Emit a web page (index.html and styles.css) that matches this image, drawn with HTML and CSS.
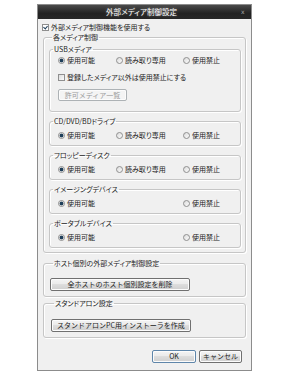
FILE: index.html
```html
<!DOCTYPE html>
<html lang="ja">

<head>
    <meta charset="utf-8">
    <meta name="viewport" content="width=device-width, initial-scale=1.0">
    <title>外部メディア制御設定</title>
    <link rel="stylesheet" href="styles.css">
</head>

<body>

    <div class="dialog">
        <div class="titlebar">
            <span class="title">外部メディア制御設定</span>
            <span class="close">x</span>
        </div>

        <div class="content">
            <label class="check top"><input type="checkbox" checked>外部メディア制御機能を使用する</label>

            <fieldset class="group outer">
                <legend>各メディア制御</legend>

                <fieldset class="group usb">
                    <legend>USBメディア</legend>
                    <div class="radios">
                        <label><input type="radio" name="usb" checked>使用可能</label>
                        <label><input type="radio" name="usb">読み取り専用</label>
                        <label><input type="radio" name="usb">使用禁止</label>
                    </div>
                    <label class="check"><input type="checkbox">登録したメディア以外は使用禁止にする</label>
                    <button class="btn list" disabled>許可メディア一覧</button>
                </fieldset>

                <fieldset class="group media">
                    <legend>CD/DVD/BDドライブ</legend>
                    <div class="radios">
                        <label><input type="radio" name="cd" checked>使用可能</label>
                        <label><input type="radio" name="cd">読み取り専用</label>
                        <label><input type="radio" name="cd">使用禁止</label>
                    </div>
                </fieldset>

                <fieldset class="group media">
                    <legend>フロッピーディスク</legend>
                    <div class="radios">
                        <label><input type="radio" name="fd" checked>使用可能</label>
                        <label><input type="radio" name="fd">読み取り専用</label>
                        <label><input type="radio" name="fd">使用禁止</label>
                    </div>
                </fieldset>

                <fieldset class="group media">
                    <legend>イメージングデバイス</legend>
                    <div class="radios">
                        <label><input type="radio" name="img" checked>使用可能</label>
                        <label class="third"><input type="radio" name="img">使用禁止</label>
                    </div>
                </fieldset>

                <fieldset class="group media">
                    <legend>ポータブルデバイス</legend>
                    <div class="radios">
                        <label><input type="radio" name="pd" checked>使用可能</label>
                        <label class="third"><input type="radio" name="pd">使用禁止</label>
                    </div>
                </fieldset>
            </fieldset>

            <fieldset class="group host">
                <legend>ホスト個別の外部メディア制御設定</legend>
                <button class="btn wide">全ホストのホスト個別設定を削除</button>
            </fieldset>

            <fieldset class="group standalone">
                <legend>スタンドアロン設定</legend>
                <button class="btn wide">スタンドアロンPC用インストーラを作成</button>
            </fieldset>

            <div class="actions">
                <button class="btn ok">OK</button>
                <button class="btn cancel">キャンセル</button>
            </div>
        </div>
    </div>

</body>

</html>
```

FILE: styles.css
```css
body {
    margin: 0;
    background-color: #fff;
    font-family: "Noto Sans CJK JP", "Noto Sans", sans-serif;
    font-size: 7px;
    font-feature-settings: "palt";
    color: #1c1c1c;
}

.dialog {
    margin: 4px 0 0 37px;
    width: 213px;
    border: 1px solid #8c8c8c;
    background-color: #f0f0f0;
}

.titlebar {
    display: flex;
    height: 14px;
    line-height: 14px;
    background: linear-gradient(#4a4a4a, #2e2e2e 40%, #222 60%, #262626);
    color: #fff;
}

.title {
    flex: 1;
    padding-left: 4px;
    text-align: center;
    font-size: 7.5px;
    text-shadow: 0 0 3px rgba(255, 255, 255, 0.4);
}

.close {
    width: 10px;
    color: #aaa;
    font-family: "DejaVu Sans", sans-serif;
    font-size: 6px;
}

.content {
    padding: 3px 5px 7px 5px;
}

/* checkbox + radio */

input[type="checkbox"],
input[type="radio"] {
    appearance: none;
    margin: 0 2px 0 0;
    width: 7px;
    height: 7px;
    flex: none;
    border: 1px solid #8f8f8f;
    background: linear-gradient(135deg, #dcdcdc, #fbfbfb);
}

input[type="radio"] {
    border-radius: 50%;
}

input[type="radio"]:checked {
    background: radial-gradient(circle, #1f3f5a 0 1.6px, #e6e6e6 2.2px, #fafafa);
}

input[type="checkbox"]:checked {
    background: #fff;
    position: relative;
}

input[type="checkbox"]:checked::after {
    content: "";
    position: absolute;
    left: 1px;
    top: 0;
    width: 2px;
    height: 3px;
    border: solid #1f3f5a;
    border-width: 0 1px 1px 0;
    transform: rotate(40deg);
}

.check {
    display: flex;
    align-items: center;
    height: 10px;
    line-height: 10px;
}

.check.top {
    margin-left: -1px;
}

.usb .check {
    margin: 7px 0 0 8px;
}

.radios {
    display: grid;
    grid-template-columns: 58px 67px auto;
    height: 10px;
    padding-left: 8px;
}

.radios label {
    display: flex;
    align-items: center;
    line-height: 10px;
}

.radios .third {
    grid-column: 3;
}

/* group boxes */

.group {
    margin: 0;
    min-width: 0;
    border: 1px solid #c6c6c6;
    border-radius: 3px;
    box-shadow: inset 1px 1px 0 #fff, 1px 1px 0 #fff;
}

.group legend {
    height: 10px;
    line-height: 10px;
    margin-left: 3px;
    padding: 0 1px;
}

.outer {
    padding: 2px 4px 4px 5px;
}

.usb {
    padding: 1px 0 10px 0;
}

.media {
    margin-top: 4px;
    padding: 4px 0 5px 0;
}

.host {
    margin-top: 5px;
    padding: 10px 0 5px 6px;
}

.standalone {
    margin-top: 1px;
    padding: 11px 0 5px 7px;
}

/* buttons */

.btn {
    display: block;
    height: 13px;
    padding: 0;
    border: 1px solid #707070;
    border-radius: 2px;
    background: linear-gradient(#f4f4f4, #ebebeb 45%, #dddddd 50%, #cfcfcf);
    box-shadow: inset 0 0 0 1px #fcfcfc;
    font-family: inherit;
    font-size: 7px;
    line-height: 11px;
    color: #1c1c1c;
}

.btn.list {
    margin: 7px 0 0 8px;
    width: 69px;
    height: 12px;
    border-color: #adb2b5;
    background: #f4f4f4;
    color: #9a9a9a;
}

.btn.wide {
    width: 140px;
}

.actions {
    display: flex;
    justify-content: flex-end;
    gap: 3px;
    margin-top: 12px;
    padding-right: 4px;
}

.btn.ok {
    width: 44px;
    border-color: #5f86aa;
}

.btn.cancel {
    width: 43px;
}
```
